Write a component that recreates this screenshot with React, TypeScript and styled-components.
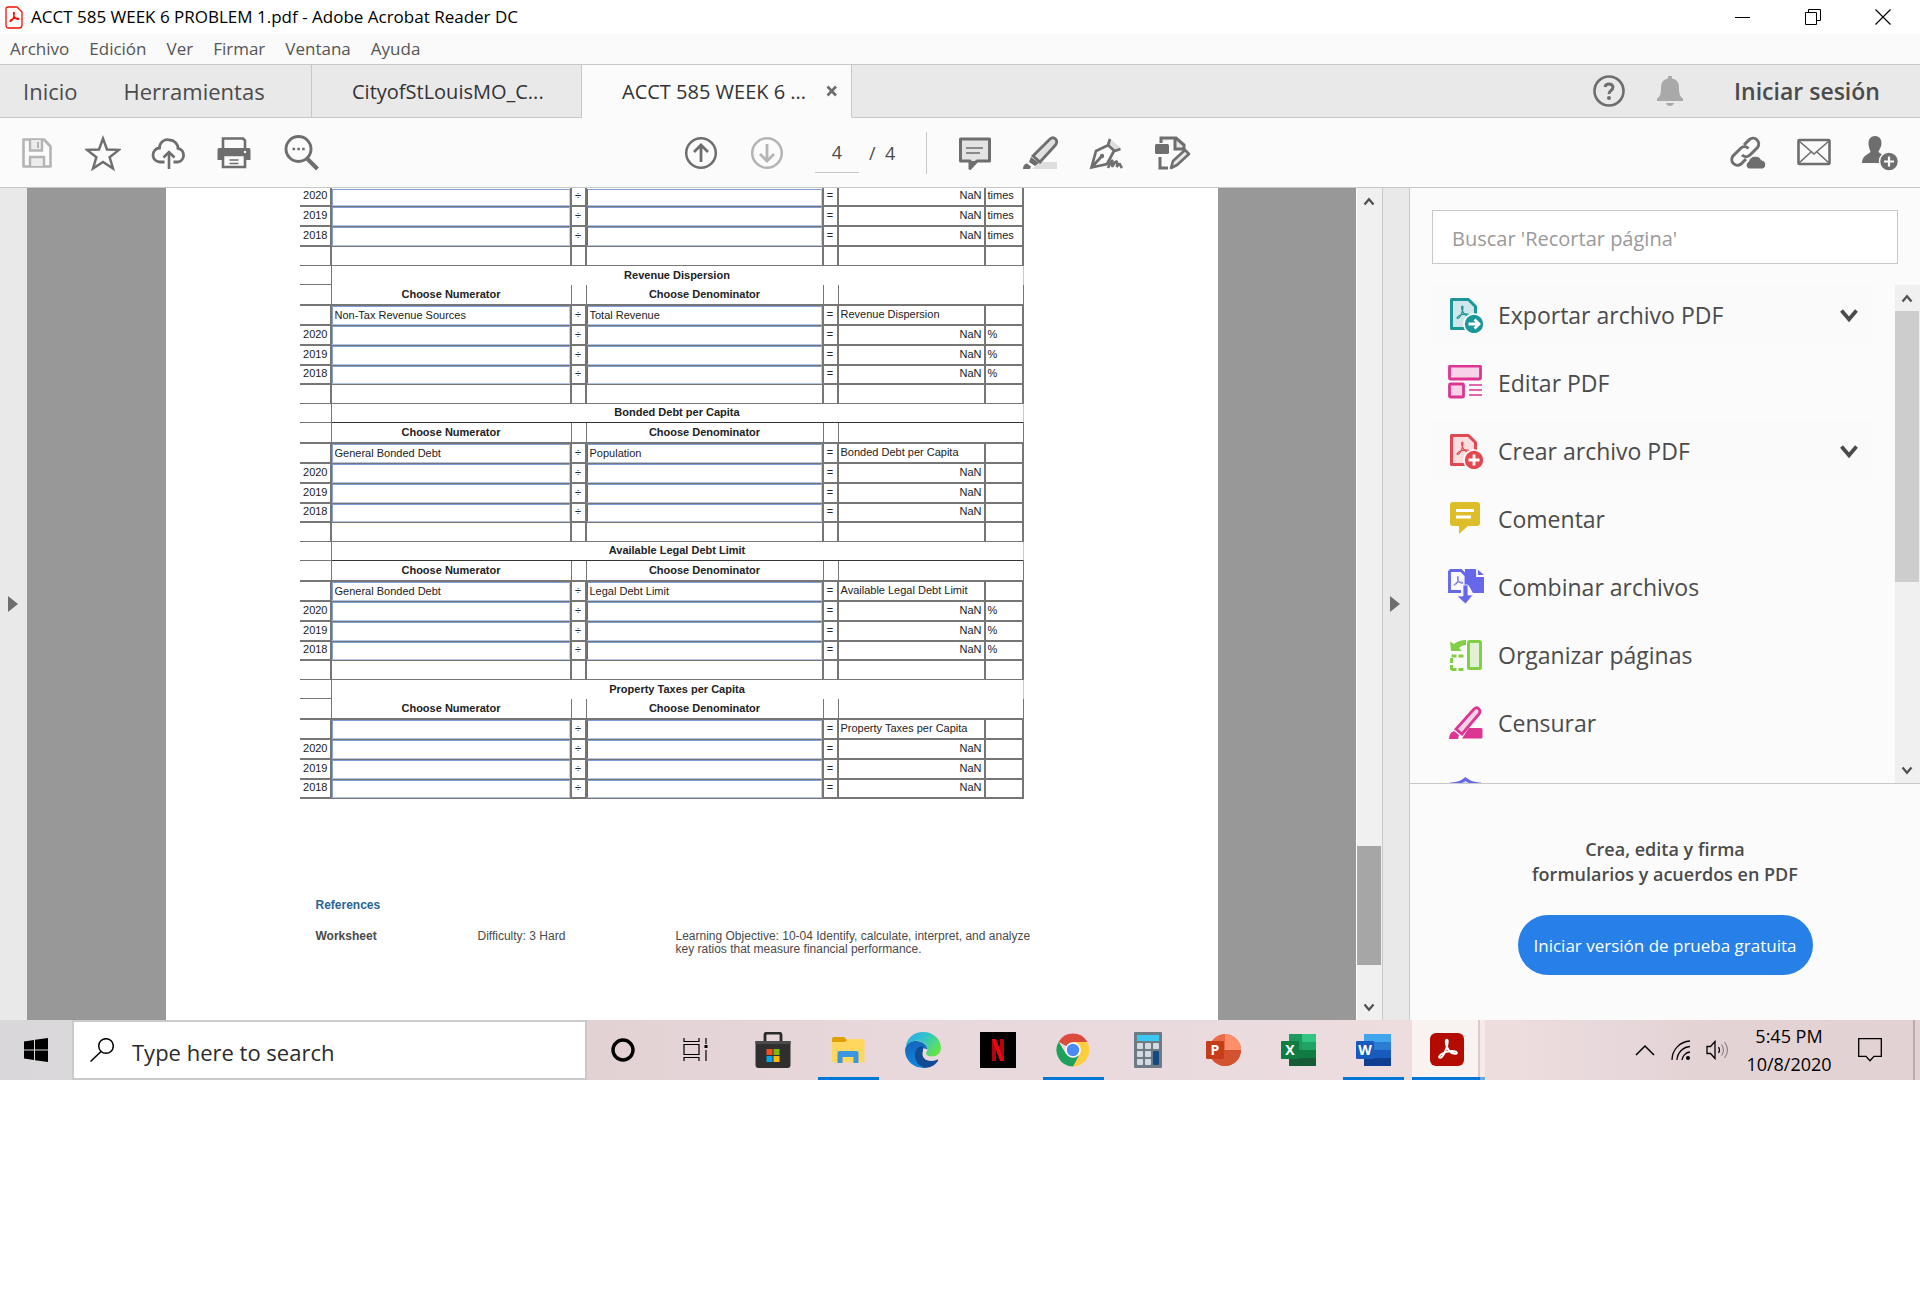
import React from "react";
import styled, { createGlobalStyle, css } from "styled-components";

const UI = `"Open Sans", "Noto Sans", sans-serif`;
const DOC = `"Liberation Sans", Arial, sans-serif`;
const LINE = "#c8c8c8";
const RULE = "#767676";
const ICON = "#6e6e6e";

const Global = createGlobalStyle`
  *, *::before, *::after { box-sizing: border-box; }
  body { margin: 0; background: #fff; font-family: ${UI}; }
  button, input { font: inherit; color: inherit; margin: 0; }
  svg { display: block; flex: none; }
`;

const PlainButton = styled.button`
  display: flex;
  align-items: center;
  justify-content: center;
  padding: 0;
  border: 0;
  background: none;
  white-space: nowrap;
`;

/* ---------- window chrome ---------- */

const TitleBar = styled.header`
  display: flex;
  align-items: center;
  gap: 8px;
  height: 34px;
  padding: 0 2px 0 5px;
  background: #fff;
`;

const Title = styled.h1`
  flex: 1;
  margin: 0;
  font-size: 17px;
  line-height: 24px;
  font-weight: 400;
  color: #000;
`;

const WindowControls = styled.div`
  display: flex;
`;

const WindowButton = styled(PlainButton)`
  width: 70px;
  height: 32px;
`;

const MenuBar = styled.nav`
  display: flex;
  align-items: center;
  gap: 20px;
  height: 31px;
  padding: 0 10px;
  background: #fafafa;
  border-bottom: 1px solid ${LINE};
`;

const MenuItem = styled(PlainButton)`
  font-size: 17px;
  line-height: 22px;
  color: #555;
`;

const TabBar = styled.div`
  display: flex;
  height: 53px;
  background: #e9e9e9;
  color: #4b4b4b;
`;

const HomeTabs = styled.div`
  display: flex;
  gap: 46px;
  width: 312px;
  padding-left: 23px;
  border-right: 1px solid ${LINE};
  border-bottom: 1px solid ${LINE};
`;

const HomeTab = styled(PlainButton)`
  font-size: 22px;
`;

const DocTab = styled.div<{ $active?: boolean }>`
  display: flex;
  align-items: center;
  gap: 20px;
  width: 270px;
  padding-left: 40px;
  border-right: 1px solid ${LINE};
  border-bottom: 1px solid ${(p) => (p.$active ? "#fbfbfb" : LINE)};
  background: ${(p) => (p.$active ? "#fbfbfb" : "none")};
`;

const DocTabLabel = styled(PlainButton)`
  font-size: 20px;
  color: #333;
`;

const Account = styled.div`
  display: flex;
  flex: 1;
  align-items: center;
  justify-content: flex-end;
  gap: 32px;
  padding-right: 37px;
  border-bottom: 1px solid ${LINE};
`;

const SignIn = styled(PlainButton)`
  min-width: 152px;
  margin-left: 16px;
  font-size: 23px;
  font-weight: 600;
`;

const Toolbar = styled.div`
  display: grid;
  grid-template-columns: 664px auto 1fr;
  align-items: center;
  height: 70px;
  padding: 0 22px 0 19px;
  background: #fbfbfb;
  border-bottom: 1px solid ${LINE};
  color: #4b4b4b;
`;

const ToolGroup = styled.div<{ $end?: boolean }>`
  display: flex;
  align-items: center;
  justify-content: ${(p) => (p.$end ? "flex-end" : "flex-start")};
  gap: 30px;
`;

const Tool = styled(PlainButton)`
  width: 36px;
  height: 40px;
`;

const Pager = styled.label`
  display: flex;
  align-items: center;
  gap: 10px;
  width: 81px;
  font-size: 18px;
  white-space: pre;
`;

const PageInput = styled.input`
  width: 44px;
  height: 40px;
  padding: 0;
  border: 0;
  border-bottom: 1px solid ${LINE};
  background: none;
  text-align: center;
`;

const Divider = styled.span`
  width: 1px;
  height: 42px;
  background: ${LINE};
`;

/* ---------- work area ---------- */

const Workspace = styled.div`
  display: flex;
  background: #e9e9e9;
`;

const Rail = styled.div<{ $lined?: boolean }>`
  display: flex;
  align-items: center;
  justify-content: center;
  width: 27px;
  padding-right: 2px;
  ${(p) => p.$lined && css`border-left: 1px solid ${LINE};`}
`;

const Canvas = styled.main`
  display: flex;
  justify-content: center;
  flex: 1;
  min-width: 0;
  background: #989898;
  overflow: hidden;
`;

const Page = styled.article`
  width: 100%;
  max-width: 1052px;
  padding-left: 134px;
  background: #fff;
  font-family: ${DOC};
`;

const Scrollbar = styled.div<{ $dark?: boolean }>`
  display: flex;
  flex-direction: column;
  flex: none;
  width: ${(p) => (p.$dark ? 26 : 25)}px;
  padding-right: 1px;
  background: #f0f0f0;
  border-left: ${(p) => (p.$dark ? "1px solid #fff" : "0")};
`;

const ScrollArrow = styled(PlainButton)`
  height: 26px;
`;

const ScrollTrack = styled.div<{ $end?: boolean }>`
  display: flex;
  flex: 1;
  flex-direction: column;
  justify-content: ${(p) => (p.$end ? "flex-end" : "flex-start")};
  padding-bottom: ${(p) => (p.$end ? 29 : 0)}px;
`;

const Thumb = styled.div<{ $dark?: boolean }>`
  height: ${(p) => (p.$dark ? 119 : 271)}px;
  background: ${(p) => (p.$dark ? "#a6a6a6" : "#cdcdcd")};
`;

/* ---------- worksheet ---------- */

const Sheet = styled.table`
  width: 724px;
  table-layout: fixed;
  border-collapse: separate;
  border-spacing: 0;
  font-size: 11px;
  line-height: 14px;
  color: #222;
`;

const Row = styled.tr<{ $h: number }>`
  height: ${(p) => p.$h}px;
`;

type CellProps = {
  $align?: "left" | "center" | "right";
  $right?: number;
  $bottom?: number;
  $rightColor?: string;
  $bottomColor?: string;
  $flush?: boolean;
};

const Cell = styled.td<CellProps>`
  height: inherit;
  padding: ${(p) => (p.$flush ? "0" : "0 2px 3px")};
  vertical-align: bottom;
  overflow: hidden;
  white-space: nowrap;
  text-align: ${(p) => p.$align ?? "left"};
  border: 0 solid ${RULE};
  border-right-width: ${(p) => p.$right ?? 2}px;
  border-bottom-width: ${(p) => p.$bottom ?? 2}px;
  ${(p) => p.$rightColor && css`border-right-color: ${p.$rightColor};`}
  ${(p) => p.$bottomColor && css`border-bottom-color: ${p.$bottomColor};`}
`;

const HeadCell = styled(Cell).attrs({ as: "th" })`
  font-weight: 700;
`;

const Field = styled.input<{ $h: number; $strong?: boolean }>`
  display: block;
  width: 100%;
  height: ${(p) => p.$h}px;
  padding: 0 2px 2px;
  border: 1px solid #c3d0e8;
  border-top-color: #7d9fd4;
  border-bottom-color: #b4c5e4;
  border-left-color: ${(p) => (p.$strong ? "#3a6fb5" : "#86a3d3")};
  border-radius: 0;
  background: #fff;
`;

const References = styled.section`
  padding: 100px 0 64px 16px;
  font-size: 12px;
  line-height: 13px;
  color: #4a4a4a;
`;

const RefTitle = styled.h2`
  margin: 0 0 18px;
  font-size: 12px;
  line-height: 13px;
  color: #2a6496;
`;

const RefRow = styled.div`
  display: grid;
  grid-template-columns: 162px 198px 364px;
`;

/* ---------- tools pane ---------- */

const Pane = styled.aside`
  display: flex;
  flex-direction: column;
  width: 511px;
  background: #fbfbfb;
  border-left: 1px solid ${LINE};
  color: #4b4b4b;
`;

const SearchTools = styled.input`
  height: 54px;
  margin: 22px 22px 21px;
  padding: 2px 19px 0;
  border: 1px solid ${LINE};
  background: #fff;
  font-size: 20px;
  &::placeholder { color: #9a9a9a; opacity: 1; }
`;

const ToolsArea = styled.div`
  display: flex;
  height: 499px;
  border-bottom: 1px solid ${LINE};
`;

const ToolList = styled.ul`
  display: flex;
  flex: 1;
  flex-direction: column;
  gap: 8px;
  margin: 0;
  padding: 0 22px;
  list-style: none;
  overflow: hidden;
`;

const ToolItem = styled(PlainButton)<{ $open?: boolean }>`
  justify-content: flex-start;
  gap: 14px;
  width: 100%;
  height: 60px;
  padding: 0 14px 0 16px;
  background: ${(p) => (p.$open ? "#fafafa" : "none")};
  font-size: 23px;
`;

const ToolName = styled.span`
  flex: 1;
  text-align: left;
`;

const Promo = styled.section`
  display: flex;
  flex-direction: column;
  align-items: center;
  gap: 28px;
  padding: 53px 0 45px;
`;

const PromoText = styled.p`
  margin: 0;
  font-size: 18px;
  line-height: 25px;
  font-weight: 600;
  text-align: center;
`;

const TrialButton = styled(PlainButton)`
  width: 295px;
  height: 60px;
  border-radius: 30px;
  background: #2680e8;
  color: #fff;
  font-size: 17px;
`;

/* ---------- taskbar ---------- */

const Taskbar = styled.footer`
  display: flex;
  height: 60px;
  background: linear-gradient(90deg, #d9d7da 0, #dad8db 72px, #e3d2d4 587px, #e8d8db 900px, #eadbdf 1250px, #eeddde 1420px, #eedddd 1520px, #e8d9dc 1590px, #e4d3d5 1700px, #e3d2d3 100%);
  color: #000;
`;

const Start = styled(PlainButton)`
  width: 72px;
`;

const SearchBox = styled.label`
  display: flex;
  align-items: center;
  gap: 18px;
  width: 515px;
  padding-left: 16px;
  border: 2px solid #cacaca;
  background: #fff;
`;

const SearchInput = styled.input`
  flex: 1;
  min-width: 0;
  padding: 4px 0 0;
  border: 0;
  background: none;
  font-size: 22px;
  &::placeholder { color: #2b2b2b; opacity: 1; }
`;

const TaskApp = styled(PlainButton)<{ $running?: boolean; $active?: boolean }>`
  position: relative;
  width: ${(p) => (p.$active ? 73 : 75)}px;
  padding-right: ${(p) => (p.$active ? 4 : 3)}px;
  ${(p) => p.$active && css`
    background: linear-gradient(90deg, #f8f2f1 66px, #d8cbca 66px, #d8cbca 68px, #f6e9e8 68px);
  `}
  ${(p) => (p.$running || p.$active) && css`
    &::after {
      content: "";
      position: absolute;
      bottom: 0;
      left: ${p.$active ? 0 : 6}px;
      right: ${p.$active ? 0 : 8}px;
      height: 3px;
      background: ${p.$active ? "linear-gradient(90deg, #0078d7 68px, #6aa9e0 68px)" : "#0078d7"};
    }
  `}
`;

const Apps = styled.div`
  display: flex;
  flex: 1;
`;

const Tray = styled.div`
  display: flex;
  align-items: center;
  gap: 16px;
`;

const Clock = styled.time`
  width: 88px;
  font-size: 18px;
  line-height: 28px;
  text-align: center;
`;

const ShowDesktop = styled(PlainButton)`
  width: 7px;
  height: 60px;
  margin-left: 6px;
  border-left: 2px solid #b9abac;
`;

/* ---------- drawings ---------- */

const TREFOIL =
  "M12 4c-1.4 0-1.3 3 0 6.2 1.3 3.2 3.8 5.7 7 5.9 2.1 0 1.9-1.9-.6-2.2-3.7-.4-7.4.4-10.5 2.1-2.5 1.4-3.3 3.1-2 3.5 1.7.3 3.9-3.4 5.5-8 1.1-3.3 1.7-7.5.6-7.5z";

const Trefoil = ({ x, y, size, color, w }: { x: number; y: number; size: number; color: string; w: number }) => (
  <svg x={x} y={y} width={size} height={size} viewBox="0 0 24 24" fill="none" stroke={color} strokeWidth={w}>
    <path d={TREFOIL} />
  </svg>
);

const Svg = ({ w = 36, h = 36, box, children }: { w?: number; h?: number; box?: string; children: React.ReactNode }) => (
  <svg width={w} height={h} viewBox={box ?? `0 0 ${w} ${h}`} fill="none" aria-hidden="true">
    {children}
  </svg>
);

const Chevron = ({ dir, w = 12, color = "#505050", sw = 3 }: { dir: "up" | "down"; w?: number; color?: string; sw?: number }) => (
  <Svg w={w} h={w * 0.75} box="0 0 16 12">
    <path d={dir === "up" ? "M2 10l6-7 6 7" : "M2 2l6 7 6-7"} stroke={color} strokeWidth={sw} />
  </Svg>
);

const Triangle = () => (
  <Svg w={10} h={16}>
    <path d="M0 0l10 8-10 8z" fill={ICON} />
  </Svg>
);

const SaveIcon = () => (
  <Svg>
    <path d="M4.500 4.500h20.500l6.500 7v20h-27z" stroke="#b4b4b4" strokeWidth="2.600" strokeLinejoin="round" />
    <path d="M11 5v10.500h12V5" stroke="#b4b4b4" strokeWidth="2.400" fill="#ececec" />
    <path d="M19 7v6" stroke="#b4b4b4" strokeWidth="2" />
    <path d="M11 31v-9h14v9" stroke="#b4b4b4" strokeWidth="2.400" fill="#ececec" />
  </Svg>
);

const StarIcon = () => (
  <Svg>
    <path d="M18 3.500l4 11 12 .4-9.400 7.300 3.400 11.300-10-6.600-10 6.600 3.400-11.300L2 14.900l12-.4z" stroke={ICON} strokeWidth="2.400" />
  </Svg>
);

const CloudIcon = () => (
  <Svg>
    <path d="M13.500 27H9.500a7 7 0 0 1-1-14 8 8 0 0 1 10-8 8.500 8.500 0 0 1 8.500 8.300A7 7 0 0 1 27 27h-4.500" stroke={ICON} strokeWidth="2.800" />
    <path d="M18 34V18M12.500 22.500L18 17l5.500 5.500" stroke={ICON} strokeWidth="2.600" />
  </Svg>
);

const PrintIcon = () => (
  <Svg>
    <path d="M6 14V3.500h20l2 2V14" stroke={ICON} strokeWidth="2.600" fill="#fbfbfb" />
    <path d="M2 13h30q1.500 0 1.500 2v10h-5v-5h-23v5h-5V15q0-2 1.500-2z" fill={ICON} />
    <path d="M6 20h22v12H6z" stroke={ICON} strokeWidth="2.600" fill="#fbfbfb" />
    <path d="M12.500 25h9M12.500 28.500h9" stroke={ICON} strokeWidth="1.600" />
    <circle cx="28" cy="17" r="1.200" fill="#fbfbfb" />
  </Svg>
);

const FindIcon = () => (
  <Svg>
    <circle cx="15.500" cy="14" r="12.500" stroke={ICON} strokeWidth="2.900" />
    <path d="M24.500 24l10 10" stroke={ICON} strokeWidth="4" />
    <path d="M9.500 14h2.600M14.300 14h2.600M19.100 14h2.600" stroke={ICON} strokeWidth="2.600" />
  </Svg>
);

const ArrowIcon = ({ down }: { down?: boolean }) => (
  <Svg>
    <circle cx="18" cy="18" r="14.800" stroke={down ? "#b4b4b4" : ICON} strokeWidth="2.500" />
    <path d={down ? "M18 9v16M11 19l7 7 7-7" : "M18 27V11M11 17l7-7 7 7"} stroke={down ? "#b4b4b4" : ICON} strokeWidth="2.800" />
  </Svg>
);

const NoteIcon = () => (
  <Svg>
    <path d="M3.500 4h29v22H20l-7 7.500V26H3.500z" stroke={ICON} strokeWidth="3" fill="#e3e3e3" strokeLinejoin="round" />
    <path d="M13 26v8l7-8z" fill={ICON} />
    <path d="M9 13h17M9 18h14" stroke={ICON} strokeWidth="1.600" />
  </Svg>
);

const MarkerIcon = () => (
  <Svg>
    <path d="M9 34l9-7h16v7z" fill="#dedede" />
    <path d="M27 4q3-2.500 5.500 0t0 6L17 27l-7-6z" stroke={ICON} strokeWidth="2.800" fill="#e0e0e0" />
    <path d="M8 22l8 6-4 3-6-4z" fill={ICON} />
    <path d="M0 34q0-5 4-5.500l4 3-1 2.500z" fill={ICON} />
  </Svg>
);

const PenIcon = () => (
  <Svg>
    <path d="M20 3l12 10-4 4-9-9z" fill="#dedede" />
    <path d="M21 4l-2 6 6.500 6 6-2M19.500 10L7 16 2.500 32.500 18 29l7-13M3 32l9-10" stroke={ICON} strokeWidth="2.700" />
    <circle cx="13" cy="21" r="2.200" fill={ICON} />
    <path d="M19 33q4-9 4.500-7t-.5 6q4-7 5-5t-.5 5q3-4 3.500-2.500T33 33" stroke={ICON} strokeWidth="2.500" />
  </Svg>
);

const StampIcon = () => (
  <Svg>
    <path d="M6 8V3h15l8 7v4h-9V3" stroke={ICON} strokeWidth="3" fill="#e8e8e8" />
    <rect x="0" y="9" width="14" height="10" rx="1.500" fill={ICON} />
    <path d="M5 22v11h8" stroke={ICON} strokeWidth="3" />
    <path d="M16 33l2-7 12-11 4 4-12 11z" stroke={ICON} strokeWidth="2.600" fill="#e8e8e8" strokeLinejoin="round" />
  </Svg>
);

const LinkIcon = () => (
  <Svg>
    <g stroke={ICON} strokeWidth="3" fill="none">
      <path d="M14 10l5.500-5.500a5.700 5.700 0 0 1 8 8L20 20a5.700 5.700 0 0 1-8 0" />
      <path d="M16 24l-5 5a5.700 5.700 0 0 1-8-8l7.500-7.500a5.700 5.700 0 0 1 8 0" />
    </g>
    <path d="M19 34a4 4 0 0 1-.5-7.500 7 7 0 0 1 13-1.500 4.700 4.700 0 0 1 1.500 9z" fill={ICON} stroke="#fbfbfb" strokeWidth="1" />
  </Svg>
);

const MailIcon = () => (
  <Svg>
    <rect x="2.500" y="5" width="31" height="24" rx="1" stroke={ICON} strokeWidth="2.600" />
    <path d="M3 6l15 13L33 6M3 28l12-11M33 28L21 17" stroke={ICON} strokeWidth="1.600" />
  </Svg>
);

const PersonIcon = () => (
  <Svg>
    <path d="M13 1c4 0 6.500 3 6.500 7s-2 6-3 8.500c0 2 8 2.500 8.500 11.500H0c0-8 8.500-9.500 8.500-11.500C7.500 14 6.500 12 6.500 8s2.500-7 6.500-7z" fill={ICON} />
    <circle cx="27" cy="26.500" r="9.500" fill={ICON} stroke="#fbfbfb" strokeWidth="1.500" />
    <path d="M27 21.500v10M22 26.500h10" stroke="#fff" strokeWidth="2.200" />
  </Svg>
);

const FileIcon = ({ color, tint, plus }: { color: string; tint: string; plus?: boolean }) => (
  <Svg>
    <path d="M3.500 2.500h17l7 7v22h-24z" stroke={color} strokeWidth="3" fill={tint} strokeLinejoin="round" />
    <Trefoil x={5} y={6} size={19} color={color} w={1.5} />
    <circle cx="26" cy="27" r="10" fill={color} stroke="#fbfbfb" strokeWidth="1.600" />
    <path d={plus ? "M26 21.500v11M20.500 27h11" : "M20.500 27h9M26.500 22.500l4.500 4.500-4.500 4.500"} stroke="#fff" strokeWidth="2.800" />
  </Svg>
);

const EditIcon = () => (
  <Svg>
    <g stroke="#dc3592" strokeWidth="2.800" fill="#f6d3e7">
      <rect x="1.500" y="1" width="31" height="13" rx="1" />
      <rect x="1.500" y="19" width="14" height="13" rx="1" />
    </g>
    <path d="M21 20h13M21 25h13M21 30h13" stroke="#dc3592" strokeWidth="1.600" />
  </Svg>
);

const CommentIcon = () => (
  <Svg>
    <path d="M5 1h24q3 0 3 3v18q0 3-3 3h-9l-9 8v-8H5q-3 0-3-3V4q0-3 3-3z" fill="#debd2a" />
    <path d="M8 9.500h18M8 16h15" stroke="#fff" strokeWidth="2.800" />
  </Svg>
);

const CombineIcon = () => (
  <Svg>
    <path d="M17 0h12l7 6v18h-11l-4-7-4-1z" fill="#6767ec" />
    <path d="M29 0v7h7" stroke="#fff" strokeWidth="1.800" />
    <path d="M1.500 1.500H13l5 5V16M13 22.500H1.500v-21" stroke="#6767ec" strokeWidth="2.900" />
    <Trefoil x={3} y={5} size={14} color="#6767ec" w={1.5} />
    <path d="M15 16h5v10h5l-7.500 9L9 27h6z" fill="#6767ec" stroke="#fbfbfb" strokeWidth=".8" />
  </Svg>
);

const OrganizeIcon = () => (
  <Svg>
    <rect x="20.500" y="4.500" width="12" height="27" rx="1" stroke="#82cf47" strokeWidth="3" fill="#e2f1d4" />
    <path d="M2 4.500l4 2.500q5-4 12-4v5q-4 0-7 3l3 3H3z" fill="#82cf47" />
    <path d="M3.500 33V19H17" stroke="#82cf47" strokeWidth="3" strokeDasharray="5 2" />
    <path d="M3.500 32.500H17" stroke="#82cf47" strokeWidth="3" strokeDasharray="5 2" />
  </Svg>
);

const RedactIcon = () => (
  <Svg>
    <path d="M26 4q3-2.500 5 0t0 5L14 29l-6-5z" stroke="#dc3592" strokeWidth="2.800" fill="#f6d3e7" />
    <path d="M21 23h12q1.500 0 1.500 2v7q0 1.500-1.500 1.500H14z" fill="#dc3592" />
    <path d="M1 34q0-6 5-8l5 4-1 4z" fill="#dc3592" />
  </Svg>
);

const ShieldIcon = () => (
  <Svg>
    <path d="M17.500 6q6 5 14 5v12q-4 8-14 12Q7.500 31 3.500 23V11q8 0 14-5z" stroke="#6767ec" strokeWidth="3" fill="#dcdcfa" />
  </Svg>
);

const StoreIcon = () => (
  <Svg>
    <path d="M10 12V3q0-2 2-2h12q2 0 2 2v9" stroke="#2b2b2b" strokeWidth="2.800" />
    <path d="M.5 9h35v24q0 3-3 3h-29q-3 0-3-3z" fill="#2f2f2f" />
    <path d="M.5 9h35v3H.5z" fill="#4a4a4a" />
    <path d="M11.500 17h6v6h-6z" fill="#f25022" />
    <path d="M18.500 17h6v6h-6z" fill="#7fba00" />
    <path d="M11.500 24h6v6h-6z" fill="#00a4ef" />
    <path d="M18.500 24h6v6h-6z" fill="#ffb900" />
  </Svg>
);

const FolderIcon = () => (
  <Svg>
    <path d="M2 7q0-2 2-2h10l3 3v4H2z" fill="#e0a100" />
    <path d="M2 10h13l3-3h15q1.500 0 1.500 1.500V29q0 1.500-1.500 1.500H3.500Q2 30.500 2 29z" fill="#ffd75e" />
    <path d="M7.500 31V21q0-2 2-2h17q2 0 2 2v10h-5v-6h-11v6z" fill="#3a96dd" />
  </Svg>
);

const EdgeIcon = () => (
  <Svg>
    <defs>
      <linearGradient id="edgeTop" x1="0" y1="0" x2="1" y2=".6">
        <stop offset="0" stopColor="#2fa8ee" />
        <stop offset=".5" stopColor="#2fc5c9" />
        <stop offset="1" stopColor="#64e34c" />
      </linearGradient>
      <linearGradient id="edgeLow" x1="0" y1="0" x2=".3" y2="1">
        <stop offset="0" stopColor="#1463b4" />
        <stop offset="1" stopColor="#0f86e0" />
      </linearGradient>
    </defs>
    <path d="M1 14C2 6 9 0 18 0c11 0 18 8 18 15.500 0 6-4.500 9-9 9-4 0-6-1.500-6-3s1.500-2 1.500-4.500C22.500 12 16 8 10 9c-4 .6-7 3-9 5z" fill="url(#edgeTop)" />
    <path d="M0 18C1 11 7 9 11 9c6 0 11.500 4 11.500 8.500-5-3-9.500 1-9.500 6.500 0 6 4 11 10 11.500C11 38 0 30 0 18z" fill="url(#edgeLow)" />
    <path d="M18 14c-5 0-8 4-8 9 0 7 5 12.500 11 12.700 5 0 9.500-3 12-7 .5-1-.3-1.500-1-1-8 3.500-17-.7-14-9z" fill="#124a94" />
  </Svg>
);

const NetflixIcon = () => (
  <Svg>
    <rect width="36" height="36" fill="#000" />
    <rect x="12" y="7" width="4" height="22" fill="#b1060f" />
    <rect x="20" y="7" width="4" height="22" fill="#b1060f" />
    <path d="M12 7h4l8 22h-4z" fill="#e50914" />
  </Svg>
);

const ChromeIcon = () => (
  <Svg>
    <path d="M18 18L3.700 9.750A16.500 16.500 0 0 1 32.300 9.750z" fill="#dd4b3e" />
    <path d="M18 10h14.300A16.500 16.500 0 0 1 18 34.500L25 22z" fill="#ffcd40" />
    <path d="M11 22L3.700 9.750A16.500 16.500 0 0 0 18 34.500l6-11z" fill="#1da05a" />
    <circle cx="18" cy="18" r="7.800" fill="#fff" />
    <circle cx="18" cy="18" r="6.200" fill="#4a8af4" />
  </Svg>
);

const CalcIcon = () => (
  <Svg w={28}>
    <rect width="28" height="36" rx="1" fill="#6f7b84" />
    <rect x="3" y="3" width="22" height="6" fill="#3cc8f5" />
    {[11, 19, 27].map((y) =>
      [3, 11, 19].map((x) => (x === 19 && y > 11 ? null : <rect key={`${x}${y}`} x={x} y={y} width="6" height="6" rx="1" fill="#d3dae2" />))
    )}
    <rect x="19" y="19" width="6" height="14" rx="1" fill="#124a86" />
  </Svg>
);

const OfficeIcon = ({ letter }: { letter: "P" | "X" | "W" }) => {
  const tones = { X: ["#33c481", "#21a366", "#107c41", "#185c37"], W: ["#41a5ee", "#2b7cd3", "#185abd", "#103f91"], P: [] }[letter];
  const badge = { P: "#c43e1c", X: "#107c41", W: "#185abd" }[letter];
  return (
    <Svg>
      {letter === "P" ? (
        <>
          <circle cx="20" cy="18" r="16" fill="#ed6c47" />
          <path d="M20 2a16 16 0 0 1 16 16H20z" fill="#ff8f6b" />
          <path d="M4 18h32a16 16 0 0 1-32 0z" fill="#d35230" />
        </>
      ) : (
        <>
          {tones.map((t, i) => (
            <rect key={t} x="9" y={2 + i * 8} width="27" height="8" fill={t} />
          ))}
          {letter === "X" && <path d="M9 2h13v8H9zM9 10h13v8H9z" fill="#1d9a5f" />}
        </>
      )}
      <rect x="1" y="9" width="18" height="18" rx="1" fill={badge} />
      <text x="10" y="23" fill="#fff" fontFamily="Open Sans, sans-serif" fontWeight="700" fontSize="14" textAnchor="middle">
        {letter}
      </text>
    </Svg>
  );
};

const AcrobatIcon = () => (
  <Svg>
    <rect x="1" y="1" width="34" height="33" rx="6" fill="#b30b00" />
    <Trefoil x={4} y={3} size={28} color="#fff" w={1.7} />
  </Svg>
);

/* ---------- data ---------- */

type Ratio = { title: string; num: string; den: string; name: string; unit: string; ruled?: boolean };

const ratios: Ratio[] = [
  { title: "Revenue Dispersion", num: "Non-Tax Revenue Sources", den: "Total Revenue", name: "Revenue Dispersion", unit: "%" },
  { title: "Bonded Debt per Capita", num: "General Bonded Debt", den: "Population", name: "Bonded Debt per Capita", unit: "", ruled: true },
  { title: "Available Legal Debt Limit", num: "General Bonded Debt", den: "Legal Debt Limit", name: "Available Legal Debt Limit", unit: "%", ruled: true },
  { title: "Property Taxes per Capita", num: "", den: "", name: "Property Taxes per Capita", unit: "" },
];

const years = ["2020", "2019", "2018"];
const columns = [32, 240, 15, 237, 15, 147, 38];

const tools = [
  { name: "Exportar archivo PDF", icon: <FileIcon color="#1b979b" tint="#cfe7e8" />, open: true },
  { name: "Editar PDF", icon: <EditIcon /> },
  { name: "Crear archivo PDF", icon: <FileIcon color="#e34850" tint="#f9dddf" plus />, open: true },
  { name: "Comentar", icon: <CommentIcon /> },
  { name: "Combinar archivos", icon: <CombineIcon /> },
  { name: "Organizar páginas", icon: <OrganizeIcon /> },
  { name: "Censurar", icon: <RedactIcon /> },
  { name: "", label: "Proteger", icon: <ShieldIcon /> },
];

const taskApps = [
  {
    name: "Cortana",
    icon: <Svg><circle cx="18" cy="18" r="10" stroke="#000" strokeWidth="3.400" /></Svg>,
  },
  {
    name: "Task view",
    icon: (
      <Svg>
        <path d="M4 6v3.500h15V6M4 29v-3.500h15V29M4 12.500h15v10H4zM26 6v6M26 18v11" stroke="#000" strokeWidth="1.200" />
        <path d="M24.500 13h3v3h-3z" fill="#000" />
      </Svg>
    ),
  },
  { name: "Microsoft Store", icon: <StoreIcon /> },
  { name: "File Explorer", icon: <FolderIcon />, running: true },
  { name: "Microsoft Edge", icon: <EdgeIcon /> },
  { name: "Netflix", icon: <NetflixIcon /> },
  { name: "Google Chrome", icon: <ChromeIcon />, running: true },
  { name: "Calculator", icon: <CalcIcon /> },
  { name: "PowerPoint", icon: <OfficeIcon letter="P" /> },
  { name: "Excel", icon: <OfficeIcon letter="X" /> },
  { name: "Word", icon: <OfficeIcon letter="W" />, running: true },
  { name: "Acrobat Reader", icon: <AcrobatIcon />, active: true },
];

/* ---------- worksheet parts ---------- */

const FormulaRow = ({ year, num = "", den = "", name, unit, id, h = 20 }: { year?: string; num?: string; den?: string; name?: string; unit: string; id: string; h?: number }) => (
  <Row $h={h}>
    <Cell $align="right">{year}</Cell>
    <Cell $flush $bottom={1}>
      <Field $h={h - 1} defaultValue={num} aria-label={`${id} numerator`} />
    </Cell>
    <Cell $align="center">÷</Cell>
    <Cell $flush $bottom={1}>
      <Field $h={h - 1} $strong defaultValue={den} aria-label={`${id} denominator`} />
    </Cell>
    <Cell $align="center">=</Cell>
    <Cell $align={name ? "left" : "right"}>{name ?? "NaN"}</Cell>
    <Cell>{unit}</Cell>
  </Row>
);

const BlankRow = () => (
  <Row $h={19}>
    {columns.map((_, i) => (
      <Cell key={i} $bottom={1} />
    ))}
  </Row>
);

const RatioRows = ({ ratio, last }: { ratio: Ratio; last: boolean }) => (
  <>
    <Row $h={19}>
      <Cell $right={1} $bottom={1} />
      <HeadCell colSpan={6} $align="center" $right={1} $rightColor="#c8c8c8" $bottom={ratio.ruled ? 1 : 0} $bottomColor="#333">
        {ratio.title}
      </HeadCell>
    </Row>
    <Row $h={21}>
      <Cell $right={1} />
      <HeadCell $align="center" $right={1}>Choose Numerator</HeadCell>
      <Cell $right={1} />
      <HeadCell $align="center" $right={1}>Choose Denominator</HeadCell>
      <Cell $right={1} />
      <Cell colSpan={2} $right={1} />
    </Row>
    <FormulaRow id={ratio.title} num={ratio.num} den={ratio.den} name={ratio.name} unit="" />
    {years.map((y, i) => (
      <FormulaRow key={y} id={`${ratio.title} ${y}`} year={y} unit={ratio.unit} h={i === 2 ? 19 : 20} />
    ))}
    {!last && <BlankRow />}
  </>
);

export default function App() {
  return (
    <>
      <Global />
      <TitleBar>
        <Svg w={18} h={23}>
          <path d="M3 1h9l5 5v13q0 3-3 3H3q-2 0-2-3V3q0-2 2-2z" stroke="#f40f02" strokeWidth="1.300" />
          <Trefoil x={2} y={4} size={14} color="#f40f02" w={2} />
        </Svg>
        <Title>ACCT 585 WEEK 6 PROBLEM 1.pdf - Adobe Acrobat Reader DC</Title>
        <WindowControls>
          <WindowButton aria-label="Minimizar">
            <Svg w={16} h={16}><path d="M0 8.500h15" stroke="#000" /></Svg>
          </WindowButton>
          <WindowButton aria-label="Restaurar">
            <Svg w={16} h={16}><path d="M.5 3.500h11v12H.5zM3.500 3.500v-3h12v11h-4" stroke="#000" /></Svg>
          </WindowButton>
          <WindowButton aria-label="Cerrar">
            <Svg w={16} h={16}><path d="M.5 .5l15 15M15.500 .5l-15 15" stroke="#000" strokeWidth="1.200" /></Svg>
          </WindowButton>
        </WindowControls>
      </TitleBar>

      <MenuBar>
        {["Archivo", "Edición", "Ver", "Firmar", "Ventana", "Ayuda"].map((m) => (
          <MenuItem key={m}>{m}</MenuItem>
        ))}
      </MenuBar>

      <TabBar>
        <HomeTabs>
          <HomeTab>Inicio</HomeTab>
          <HomeTab>Herramientas</HomeTab>
        </HomeTabs>
        <DocTab>
          <DocTabLabel>CityofStLouisMO_C...</DocTabLabel>
        </DocTab>
        <DocTab $active>
          <DocTabLabel>ACCT 585 WEEK 6 ...</DocTabLabel>
          <PlainButton aria-label="Cerrar pestaña">
            <Svg w={12} h={12}><path d="M1.500 1.500l8.500 9M10 1.500l-8.500 9" stroke={ICON} strokeWidth="2.600" /></Svg>
          </PlainButton>
        </DocTab>
        <Account>
          <PlainButton aria-label="Ayuda">
            <Svg w={32} h={32}>
              <circle cx="16" cy="16" r="14.500" stroke={ICON} strokeWidth="2.600" />
              <path d="M12 12q.5-3 4-3t4 3q0 2-2 3.500t-2 3.500" stroke={ICON} strokeWidth="3" />
              <circle cx="16" cy="23" r="2" fill={ICON} />
            </Svg>
          </PlainButton>
          <PlainButton aria-label="Notificaciones">
            <Svg w={26} h={30}>
              <path d="M11 0h4v2.500q7 1 7 9c0 7 1 9 4 11V25H0v-2.500c3-2 4-4 4-11q0-8 7-9zM9 27h8q-1 3-4 3t-4-3z" fill="#a9a9a9" />
            </Svg>
          </PlainButton>
          <SignIn>Iniciar sesión</SignIn>
        </Account>
      </TabBar>

      <Toolbar>
        <ToolGroup>
          <Tool aria-label="Guardar"><SaveIcon /></Tool>
          <Tool aria-label="Favorito"><StarIcon /></Tool>
          <Tool aria-label="Cargar"><CloudIcon /></Tool>
          <Tool aria-label="Imprimir"><PrintIcon /></Tool>
          <Tool aria-label="Buscar"><FindIcon /></Tool>
        </ToolGroup>
        <ToolGroup>
          <Tool aria-label="Página anterior"><ArrowIcon /></Tool>
          <Tool aria-label="Página siguiente"><ArrowIcon down /></Tool>
          <Pager>
            <PageInput defaultValue="4" aria-label="Página" />
            <span>/  4</span>
          </Pager>
          <Divider />
          <Tool aria-label="Nota"><NoteIcon /></Tool>
          <Tool aria-label="Resaltar"><MarkerIcon /></Tool>
          <Tool aria-label="Firmar"><PenIcon /></Tool>
          <Tool aria-label="Editar páginas"><StampIcon /></Tool>
        </ToolGroup>
        <ToolGroup $end>
          <Tool aria-label="Compartir vínculo"><LinkIcon /></Tool>
          <Tool aria-label="Correo"><MailIcon /></Tool>
          <Tool aria-label="Agregar personas"><PersonIcon /></Tool>
        </ToolGroup>
      </Toolbar>

      <Workspace>
        <Rail><Triangle /></Rail>
        <Canvas>
          <Page>
            <Sheet>
              <colgroup>
                {columns.map((w, i) => (
                  <col key={i} width={w} />
                ))}
              </colgroup>
              <tbody>
                {years.map((y, i) => (
                  <FormulaRow key={y} id={y} year={y} unit="times" h={i === 0 ? 18 : 20} />
                ))}
                <BlankRow />
                {ratios.map((r, i) => (
                  <RatioRows key={r.title} ratio={r} last={i === ratios.length - 1} />
                ))}
              </tbody>
            </Sheet>
            <References>
              <RefTitle>References</RefTitle>
              <RefRow>
                <b>Worksheet</b>
                <span>Difficulty: 3 Hard</span>
                <span>Learning Objective: 10-04 Identify, calculate, interpret, and analyze key ratios that measure financial performance.</span>
              </RefRow>
            </References>
          </Page>
        </Canvas>
        <Scrollbar $dark>
          <ScrollArrow aria-label="Subir"><Chevron dir="up" /></ScrollArrow>
          <ScrollTrack $end><Thumb $dark /></ScrollTrack>
          <ScrollArrow aria-label="Bajar"><Chevron dir="down" /></ScrollArrow>
        </Scrollbar>
        <Rail $lined><Triangle /></Rail>
        <Pane>
          <SearchTools aria-label="Buscar herramientas" placeholder="Buscar 'Recortar página'" />
          <ToolsArea>
            <ToolList>
              {tools.map((t) => (
                <li key={t.name || t.label}>
                  <ToolItem $open={t.open} aria-label={t.label}>
                    {t.icon}
                    <ToolName>{t.name}</ToolName>
                    {t.open && <Chevron dir="down" w={20} color="#4b4b4b" />}
                  </ToolItem>
                </li>
              ))}
            </ToolList>
            <Scrollbar>
              <ScrollArrow aria-label="Subir lista"><Chevron dir="up" /></ScrollArrow>
              <ScrollTrack><Thumb /></ScrollTrack>
              <ScrollArrow aria-label="Bajar lista"><Chevron dir="down" /></ScrollArrow>
            </Scrollbar>
          </ToolsArea>
          <Promo>
            <PromoText>
              Crea, edita y firma
              <br />
              formularios y acuerdos en PDF
            </PromoText>
            <TrialButton>Iniciar versión de prueba gratuita</TrialButton>
          </Promo>
        </Pane>
      </Workspace>

      <Taskbar>
        <Start aria-label="Start">
          <Svg w={24} h={24}>
            <path d="M0 3.500L10 2v9.500H0zM11 1.800L24 0v11.500H11zM0 12.500h10V22L0 20.500zM11 12.500h13V24l-13-1.800z" fill="#000" />
          </Svg>
        </Start>
        <SearchBox>
          <Svg w={24} h={24}>
            <circle cx="16" cy="8" r="7.300" stroke="#000" strokeWidth="1.500" />
            <path d="M11 13.500L.5 23.500" stroke="#000" strokeWidth="1.500" />
          </Svg>
          <SearchInput aria-label="Search" placeholder="Type here to search" />
        </SearchBox>
        <Apps>
          {taskApps.map((a) => (
            <TaskApp key={a.name} aria-label={a.name} $running={a.running} $active={a.active}>
              {a.icon}
            </TaskApp>
          ))}
        </Apps>
        <Tray>
          <PlainButton aria-label="Hidden icons">
            <Svg w={20} h={12}><path d="M1 11l9-9 9 9" stroke="#000" strokeWidth="1.500" /></Svg>
          </PlainButton>
          <PlainButton aria-label="Network">
            <Svg w={19} h={20}>
              <path d="M1 20A19 19 0 0 1 19 1M6 20A14 14 0 0 1 19 6.500M11 20a9 9 0 0 1 8-8" stroke="#000" strokeWidth="1.300" />
              <circle cx="17" cy="18" r="2" fill="#000" />
            </Svg>
          </PlainButton>
          <PlainButton aria-label="Volume">
            <Svg w={23} h={20}>
              <path d="M1 6.500h3.500L9 1.500v17l-4.500-5H1z" stroke="#000" strokeWidth="1.300" />
              <path d="M12.500 7q2 3 0 6" stroke="#000" strokeWidth="1.200" />
              <path d="M15.500 4.500q4 5.500 0 11M18.500 2q6 8 0 16" stroke="#8d8284" strokeWidth="1.200" />
            </Svg>
          </PlainButton>
          <Clock>
            5:45 PM
            <br />
            10/8/2020
          </Clock>
          <PlainButton aria-label="Notifications">
            <Svg w={42} h={24} box="-9 0 42 24">
              <path d="M.7 .7h22.600v17.600H16l-4 4.500-4-4.500H.7z" stroke="#000" strokeWidth="1.300" />
            </Svg>
          </PlainButton>
          <ShowDesktop aria-label="Show desktop" />
        </Tray>
      </Taskbar>
    </>
  );
}
